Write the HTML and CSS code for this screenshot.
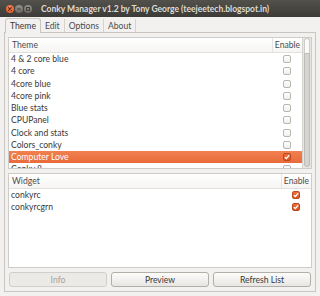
FILE: index.html
```html
<!DOCTYPE html>
<html>
  <head>
    <meta charset="utf-8">
    <title>Conky Manager</title>
    <link rel="stylesheet" href="styles.css">
  </head>
  <body>

    <div class="window">

      <div class="titlebar">
        <div class="wm-buttons">
          <div class="wm-button wm-close">
            <svg width="8" height="8" viewBox="0 0 8 8"><path d="M2.6 2.6 L5.4 5.4 M5.4 2.6 L2.6 5.4" stroke="#4a2a1a" stroke-width="1.1" stroke-linecap="round"/></svg>
          </div>
          <div class="wm-button wm-min">
            <svg width="8" height="8" viewBox="0 0 8 8"><path d="M2.5 4 L5.5 4" stroke="#3c3b37" stroke-width="1"/></svg>
          </div>
          <div class="wm-button wm-max">
            <svg width="8" height="8" viewBox="0 0 8 8"><rect x="2.5" y="2.5" width="3" height="3" fill="none" stroke="#3c3b37" stroke-width="0.9"/></svg>
          </div>
        </div>
        <div class="title">Conky Manager v1.2 by Tony George (teejeetech.blogspot.in)</div>
      </div>

      <div class="tabs">
        <div class="tab tab-active">Theme</div>
        <div class="tab">Edit</div>
        <div class="tab">Options</div>
        <div class="tab">About</div>
      </div>

      <div class="notebook">

        <div class="list list-theme">
          <div class="list-main">
            <div class="list-header">
              <div class="col-name">Theme</div>
              <div class="col-check">Enable</div>
            </div>
            <div class="row"><div class="col-name">4 &amp; 2 core blue</div><div class="col-check"><span class="check"></span></div></div>
            <div class="row"><div class="col-name">4 core</div><div class="col-check"><span class="check"></span></div></div>
            <div class="row"><div class="col-name">4core blue</div><div class="col-check"><span class="check"></span></div></div>
            <div class="row"><div class="col-name">4core pink</div><div class="col-check"><span class="check"></span></div></div>
            <div class="row"><div class="col-name">Blue stats</div><div class="col-check"><span class="check"></span></div></div>
            <div class="row"><div class="col-name">CPUPanel</div><div class="col-check"><span class="check"></span></div></div>
            <div class="row"><div class="col-name">Clock and stats</div><div class="col-check"><span class="check"></span></div></div>
            <div class="row"><div class="col-name">Colors_conky</div><div class="col-check"><span class="check"></span></div></div>
            <div class="row row-selected"><div class="col-name">Computer Love</div><div class="col-check"><span class="check check-on"><svg width="8" height="8" viewBox="0 0 8 8"><path d="M1.8 4.2 L3.3 5.6 L6.2 2.3" fill="none" stroke="#fff" stroke-width="1.3"/></svg></span></div></div>
            <div class="row"><div class="col-name">Conky 8</div><div class="col-check"><span class="check"></span></div></div>
          </div>
          <div class="scrollbar">
            <div class="scroll-top"></div>
            <div class="scroll-thumb"></div>
          </div>
        </div>

        <div class="list list-widget">
          <div class="list-main">
            <div class="list-header">
              <div class="col-name">Widget</div>
              <div class="col-check">Enable</div>
            </div>
            <div class="row"><div class="col-name">conkyrc</div><div class="col-check"><span class="check check-on"><svg width="8" height="8" viewBox="0 0 8 8"><path d="M1.8 4.2 L3.3 5.6 L6.2 2.3" fill="none" stroke="#fff" stroke-width="1.3"/></svg></span></div></div>
            <div class="row"><div class="col-name">conkyrcgrn</div><div class="col-check"><span class="check check-on"><svg width="8" height="8" viewBox="0 0 8 8"><path d="M1.8 4.2 L3.3 5.6 L6.2 2.3" fill="none" stroke="#fff" stroke-width="1.3"/></svg></span></div></div>
          </div>
        </div>

        <div class="buttons">
          <button class="button button-disabled">Info</button>
          <button class="button">Preview</button>
          <button class="button">Refresh List</button>
        </div>

      </div>

    </div>

  </body>
</html>
```

FILE: styles.css
```css
* {
  box-sizing: border-box;
}

body {
  margin: 0px;
  padding: 0px;
  background-color: rgb(242, 241, 240);
  font-family: "Lato", "Noto Sans", sans-serif;
  font-size: 8.6px;
  color: rgb(56, 56, 56);
}

.window {
  display: flex;
  flex-direction: column;
  width: 320px;
  height: 296px;
}

.titlebar {
  display: flex;
  align-items: center;
  height: 17px;
  padding-left: 6px;
  background: linear-gradient(rgb(82, 81, 76), rgb(60, 59, 55));
}

.wm-buttons {
  display: flex;
  gap: 1px;
}

.wm-button {
  display: flex;
  width: 8px;
  height: 8px;
  border-radius: 50%;
}

.wm-close {
  background: radial-gradient(circle at 50% 35%, rgb(246, 140, 95), rgb(222, 75, 22));
}

.wm-min,
.wm-max {
  background: linear-gradient(rgb(150, 146, 139), rgb(105, 102, 96));
}

.title {
  margin-left: 9px;
  color: rgb(223, 219, 210);
  font-weight: 700;
  font-size: 8.5px;
  white-space: nowrap;
}

.tabs {
  display: flex;
  align-items: flex-end;
  height: 15px;
  padding-left: 5px;
}

.tab {
  display: flex;
  align-items: center;
  height: 13px;
  padding: 0px 4px;
  border-right: 1px solid rgb(214, 211, 206);
  color: rgb(76, 76, 76);
}

.tab-active {
  position: relative;
  z-index: 1;
  height: 15px;
  margin-bottom: -1px;
  padding-bottom: 1px;
  border: 1px solid rgb(201, 198, 193);
  border-bottom: none;
  border-radius: 3px 3px 0px 0px;
  background-color: rgb(242, 241, 240);
  color: rgb(56, 56, 56);
}

.notebook {
  display: flex;
  flex-direction: column;
  gap: 4px;
  flex: 1;
  margin: 0px 4px 4px 4px;
  padding: 4px 3px;
  border: 1px solid rgb(201, 198, 193);
}

.list {
  display: flex;
  border: 1px solid rgb(206, 204, 200);
  background-color: rgb(255, 255, 255);
  overflow: hidden;
}

.list-theme {
  height: 132px;
}

.list-widget {
  height: 95px;
}

.list-main {
  flex: 1;
  overflow: hidden;
}

.list-header {
  display: flex;
  height: 15px;
  border-bottom: 1px solid rgb(226, 224, 221);
  background: linear-gradient(rgb(255, 255, 255), rgb(246, 245, 244));
  color: rgb(76, 76, 76);
}

.list-header .col-name {
  padding-left: 3px;
}

.list-header .col-check {
  border-left: 1px solid rgb(230, 228, 225);
}

.col-name {
  display: flex;
  align-items: center;
  flex: 1;
  padding-left: 2px;
  white-space: nowrap;
}

.col-check {
  display: flex;
  align-items: center;
  justify-content: center;
  width: 30px;
}

.row {
  display: flex;
  height: 12.25px;
}

.row-selected {
  background: linear-gradient(rgb(241, 128, 80), rgb(233, 106, 58));
  color: rgb(255, 255, 255);
}

.check {
  display: flex;
  width: 8px;
  height: 8px;
  border: 1px solid rgb(184, 182, 178);
  border-radius: 2px;
  background: linear-gradient(rgb(255, 255, 255), rgb(240, 239, 237));
}

.check-on {
  border-color: rgb(184, 74, 30);
  background: linear-gradient(rgb(240, 110, 60), rgb(222, 84, 30));
}

.check-on svg {
  margin: -1px;
}

.scrollbar {
  display: flex;
  flex-direction: column;
  width: 9px;
  padding: 0px 1px 1px 1px;
  background-color: rgb(232, 230, 227);
  border-left: 1px solid rgb(214, 211, 206);
}

.scroll-top {
  height: 15px;
  border: 1px solid rgb(206, 204, 200);
  border-bottom: none;
  border-radius: 3px 3px 0px 0px;
  background-color: rgb(250, 250, 249);
}

.scroll-thumb {
  flex: 1;
  border: 1px solid rgb(190, 188, 184);
  border-radius: 0px 0px 3px 3px;
  background-color: rgb(214, 212, 208);
}

.buttons {
  display: flex;
  gap: 4px;
  height: 15px;
  padding: 0px 1px;
}

.button {
  flex: 1;
  height: 15px;
  padding: 0px;
  border: 1px solid rgb(178, 175, 169);
  border-radius: 3px;
  background: linear-gradient(rgb(252, 252, 251), rgb(232, 230, 227));
  font-family: "Lato", "Noto Sans", sans-serif;
  font-size: 8.6px;
  color: rgb(56, 56, 56);
}

.button-disabled {
  border-color: rgb(210, 207, 202);
  background: rgb(236, 234, 231);
  color: rgb(165, 162, 157);
}
```
